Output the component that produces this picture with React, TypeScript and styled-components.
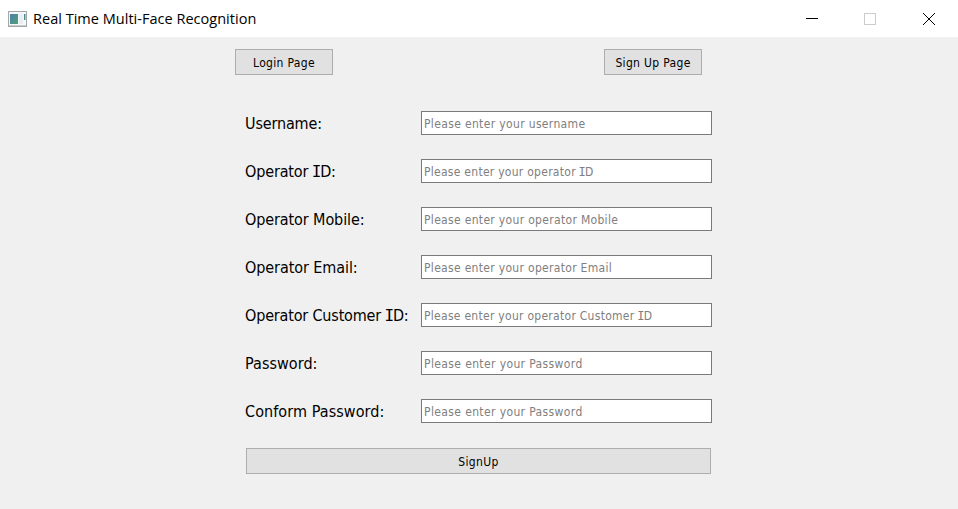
import React, { useState } from "react";
import styled, { createGlobalStyle } from "styled-components";

const GlobalStyle = createGlobalStyle`
  * { box-sizing: border-box; }
  body { margin: 0; background: #f0f0f0; overflow: hidden; }
`;

const uiFont = `"DejaVu Sans Condensed", "DejaVu Sans", sans-serif`;

const Window = styled.div`
  width: 958px;
  height: 509px;
  display: flex;
  flex-direction: column;
  background: #f0f0f0;
  color: #000;
  font-family: ${uiFont};
  font-stretch: condensed;
`;

const TitleBar = styled.header`
  height: 37px;
  display: flex;
  align-items: center;
  padding-left: 8px;
  background: #fff;
`;

const Title = styled.h1`
  flex: 1;
  margin: 0 0 0 6px;
  font: 400 14.5px/20px "Open Sans", "Noto Sans", sans-serif;
  letter-spacing: 0.02px;
  white-space: nowrap;
`;

const WindowButton = styled.button`
  width: 58px;
  height: 37px;
  padding: 0;
  border: 0;
  background: none;
  display: grid;
  place-items: center;
  svg { display: block; }
  &:last-child { margin-left: 1px; }
`;

const Content = styled.main`
  width: 468px;
  margin: 12px 0 0 235px;
`;

const PageTabs = styled.nav`
  width: 467px;
  display: flex;
  justify-content: space-between;
`;

const PushButton = styled.button<{ $width: number }>`
  width: ${(p) => p.$width}px;
  height: 26px;
  padding: 1px 0 0;
  border: 1px solid #adadad;
  background: #e1e1e1;
  color: #000;
  font-family: ${uiFont};
  font-stretch: condensed;
  font-size: 12px;
  line-height: 20px;
  letter-spacing: 0.33px;
`;

const Form = styled.form`
  width: 467px;
  margin: 36px 0 0 10px;
  display: flex;
  flex-direction: column;
  gap: 24px;
`;

const Row = styled.div`
  height: 24px;
  display: grid;
  grid-template-columns: 176px 291px;
  grid-template-rows: 24px;
`;

const Label = styled.label<{ $spacing: number }>`
  padding-top: 1px;
  font-size: 16px;
  line-height: 24px;
  letter-spacing: ${(p) => p.$spacing}px;
  white-space: nowrap;
`;

const Field = styled.div`
  height: 24px;
  display: grid;
  border: 1px solid #7a7a7a;
  background: #fff;
  > * { grid-area: 1 / 1; }
`;

const Input = styled.input`
  min-width: 0;
  height: 22px;
  border: 0;
  padding: 0 2px;
  background: transparent;
  outline: 0;
  font-family: ${uiFont};
  font-size: 12px;
`;

const Hint = styled.span<{ $spacing: number }>`
  height: 22px;
  padding: 1px 0 0 2px;
  color: #808080;
  font-size: 12px;
  line-height: 22px;
  letter-spacing: ${(p) => p.$spacing}px;
  white-space: nowrap;
  pointer-events: none;
`;

const BarredI = styled.span`
  font-family: "DejaVu Sans Mono", monospace;
  font-stretch: normal;
  margin: 0 -1px;
`;

const Submit = styled(PushButton)`
  margin: 1px 0 0 1px;
`;

/* Capital I is set with crossbars, as in the system dialog face. */
function Text({ children }: { children: string }) {
  const parts = children.split("I");
  return (
    <>
      {parts.map((part, i) => (
        <React.Fragment key={i}>
          {i > 0 && <BarredI>I</BarredI>}
          {part}
        </React.Fragment>
      ))}
    </>
  );
}

interface FieldSpec {
  id: string;
  label: string;
  hint: string;
  labelSpacing: number;
  hintSpacing: number;
  secret?: boolean;
}

const fields: FieldSpec[] = [
  { id: "username", label: "Username:", hint: "Please enter your username", labelSpacing: -0.15, hintSpacing: 0.35 },
  { id: "operator-id", label: "Operator ID:", hint: "Please enter your operator ID", labelSpacing: -0.15, hintSpacing: 0.27 },
  { id: "mobile", label: "Operator Mobile:", hint: "Please enter your operator Mobile", labelSpacing: -0.1, hintSpacing: 0.32 },
  { id: "email", label: "Operator Email:", hint: "Please enter your operator Email", labelSpacing: -0.08, hintSpacing: 0.31 },
  { id: "customer", label: "Operator Customer ID:", hint: "Please enter your operator Customer ID", labelSpacing: -0.17, hintSpacing: 0.28 },
  { id: "password", label: "Password:", hint: "Please enter your Password", labelSpacing: 0.06, hintSpacing: 0.38, secret: true },
  { id: "confirm", label: "Conform Password:", hint: "Please enter your Password", labelSpacing: 0.08, hintSpacing: 0.38, secret: true },
];

function FormRow({ id, label, hint, labelSpacing, hintSpacing, secret }: FieldSpec) {
  const [value, setValue] = useState("");
  return (
    <Row>
      <Label htmlFor={id} $spacing={labelSpacing}><Text>{label}</Text></Label>
      <Field>
        <Input id={id} type={secret ? "password" : "text"} value={value} onChange={(e) => setValue(e.target.value)} />
        {value === "" && <Hint $spacing={hintSpacing}><Text>{hint}</Text></Hint>}
      </Field>
    </Row>
  );
}

function AppIcon() {
  return (
    <svg width="19" height="16" viewBox="0 0 19 16">
      <defs>
        <linearGradient id="screen" x1="0" y1="0" x2="1" y2="1">
          <stop offset="0" stopColor="#4a7fa8" />
          <stop offset="1" stopColor="#4fa278" />
        </linearGradient>
      </defs>
      <rect x="0.5" y="0.5" width="18" height="15" fill="#f5f7f8" stroke="#a3a7aa" />
      <rect x="1" y="14" width="17" height="1" fill="#c9cccd" />
      <rect x="2" y="3" width="8" height="10" fill="url(#screen)" />
      <rect x="11" y="3" width="4" height="10" fill="#e9eef3" />
      <rect x="16" y="3" width="1.5" height="6" fill="url(#screen)" />
    </svg>
  );
}

export default function App() {
  return (
    <Window>
      <GlobalStyle />
      <TitleBar>
        <AppIcon />
        <Title>Real Time Multi-Face Recognition</Title>
        <WindowButton aria-label="Minimize">
          <svg width="12" height="12"><rect y="5" width="12" height="1" /></svg>
        </WindowButton>
        <WindowButton aria-label="Maximize" disabled>
          <svg width="12" height="12"><rect x="0.5" y="0.5" width="11" height="11" fill="none" stroke="#ccc" /></svg>
        </WindowButton>
        <WindowButton aria-label="Close">
          <svg width="12" height="12"><path d="M0 0L12 12M12 0L0 12" stroke="#000" strokeWidth="1" /></svg>
        </WindowButton>
      </TitleBar>
      <Content>
        <PageTabs>
          <PushButton $width={98}>Login Page</PushButton>
          <PushButton $width={98}>Sign Up Page</PushButton>
        </PageTabs>
        <Form onSubmit={(e) => e.preventDefault()}>
          {fields.map((f) => <FormRow key={f.id} {...f} />)}
          <Submit $width={465}>SignUp</Submit>
        </Form>
      </Content>
    </Window>
  );
}
